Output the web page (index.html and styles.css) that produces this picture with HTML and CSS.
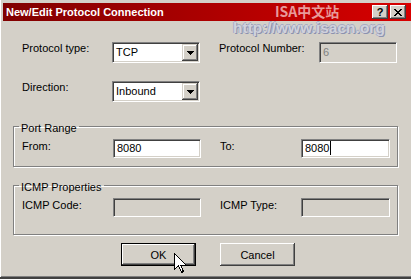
FILE: index.html
```html
<!DOCTYPE html>
<html lang="en">
<head>
    <meta charset="UTF-8">
    <title>New/Edit Protocol Connection</title>
    <link rel="stylesheet" href="styles.css">
</head>
<body>
    <div class="window">
        <div class="titlebar">
            <span class="title">New/Edit Protocol Connection</span>
            <div class="cap-btns">
                <span class="cap-btn">?</span>
                <span class="cap-btn">
                    <svg width="8" height="7" viewBox="0 0 8 7" shape-rendering="crispEdges">
                        <path d="M0 0h2v1h-2zM6 0h2v1h-2zM1 1h2v1h-2zM5 1h2v1h-2zM2 2h4v1h-4zM3 3h2v1h-2zM2 4h4v1h-4zM1 5h2v1h-2zM5 5h2v1h-2zM0 6h2v1h-2zM6 6h2v1h-2z" fill="#000"/>
                    </svg>
                </span>
            </div>
        </div>
        <div class="wm-cn">ISA中文站</div>
        <div class="wm-url">http://www.isacn.org</div>

        <div class="content">
            <div class="top-grid">
                <span class="lbl">Protocol type:</span>
                <div class="combo sunken">
                    <span class="combo-text">TCP</span>
                    <span class="drop raised">
                        <svg width="7" height="4" viewBox="0 0 7 4" shape-rendering="crispEdges"><path d="M0 0h7v1h-1v1h-1v1h-1v1h-1v-1h-1v-1h-1v-1h-1z" fill="#000"/></svg>
                    </span>
                </div>
                <span class="lbl">Protocol Number:</span>
                <div class="field sunken disabled tall">6</div>

                <span class="lbl">Direction:</span>
                <div class="combo sunken">
                    <span class="combo-text">Inbound</span>
                    <span class="drop raised">
                        <svg width="7" height="4" viewBox="0 0 7 4" shape-rendering="crispEdges"><path d="M0 0h7v1h-1v1h-1v1h-1v1h-1v-1h-1v-1h-1v-1h-1z" fill="#000"/></svg>
                    </span>
                </div>
            </div>

            <fieldset class="group port">
                <legend>Port Range</legend>
                <div class="group-row">
                    <span class="lbl">From:</span>
                    <div class="field sunken">8080</div>
                    <span class="lbl">To:</span>
                    <div class="field sunken wide">8080<span class="caret"></span></div>
                </div>
            </fieldset>

            <fieldset class="group icmp">
                <legend>ICMP Properties</legend>
                <div class="group-row">
                    <span class="lbl">ICMP Code:</span>
                    <div class="field sunken disabled"></div>
                    <span class="lbl">ICMP Type:</span>
                    <div class="field sunken disabled wide"></div>
                </div>
            </fieldset>

            <div class="buttons">
                <button class="btn default">OK</button>
                <button class="btn">Cancel</button>
            </div>
        </div>

        <svg class="cursor" width="12" height="20" viewBox="0 0 12 20" shape-rendering="crispEdges">
            <path d="M0.5 0.5v16l4-4 3 7 2-1-3-6.5h5.5z" fill="#fff" stroke="#000" stroke-width="1"/>
        </svg>
    </div>
</body>
</html>
```

FILE: styles.css
```css
* {
    box-sizing: border-box;
}

html, body {
    margin: 0;
}

body {
    width: 411px;
    height: 279px;
    overflow: hidden;
    font-family: "Liberation Sans", Arial, sans-serif;
    font-size: 11px;
    color: #000;
}

.window {
    position: relative;
    height: 279px;
    padding: 3px 0 0 3px;
    background: #d4d0c8;
    border-bottom: 2px solid #404040;
    box-shadow: inset 1px 0 #fff, inset 0 -1px #808080;
}

.titlebar {
    position: relative;
    z-index: 1;
    height: 18px;
    display: flex;
    align-items: center;
    justify-content: space-between;
    padding: 0 5px 0 3px;
    background: linear-gradient(to right, #800000, #d80000);
    color: #fff;
    font-weight: bold;
}

.cap-btns {
    display: flex;
    gap: 2px;
}

.cap-btn {
    width: 16px;
    height: 14px;
    display: flex;
    align-items: center;
    justify-content: center;
    background: #d4d0c8;
    color: #000;
    font-size: 11px;
    font-weight: bold;
    box-shadow: inset -1px -1px #404040, inset 1px 1px #fff, inset -2px -2px #808080;
}

.wm-cn {
    position: absolute;
    left: 275px;
    top: 4px;
    z-index: 2;
    font: bold 14px "Noto Sans CJK SC", sans-serif;
    line-height: 15px;
    color: #e89a9a;
}

.wm-url {
    position: absolute;
    left: 233px;
    top: 20px;
    z-index: 0;
    font: bold 15.5px "Liberation Sans", Arial, sans-serif;
    line-height: 16px;
    color: #d0d2dc;
    text-shadow: 1px 1px 0 #8c92b0, -1px 0 0 #a8acc2, 0 -1px 0 #a8acc2;
}

.content {
    padding: 21px 13px 0 10px;
}

.top-grid {
    display: grid;
    grid-template-columns: 90px 107px 100px 78px;
    grid-auto-rows: 21px;
    row-gap: 18px;
    align-items: start;
    padding-left: 9px;
}

.lbl {
    line-height: 13px;
    white-space: nowrap;
}

.sunken {
    border: 1px solid;
    border-color: #808080 #fff #fff #808080;
    box-shadow: inset 1px 1px #404040, inset -1px -1px #d4d0c8;
}

.raised {
    background: #d4d0c8;
    box-shadow: inset -1px -1px #404040, inset 1px 1px #d4d0c8, inset -2px -2px #808080, inset 2px 2px #fff;
}

.combo {
    width: 88px;
    height: 21px;
    display: flex;
    padding: 1px;
    background: #fff;
}

.combo-text {
    flex: 1;
    padding-left: 2px;
    line-height: 17px;
}

.drop {
    width: 16px;
    height: 17px;
    display: flex;
    align-items: center;
    justify-content: center;
}

.field {
    width: 88px;
    height: 19px;
    padding: 0 3px;
    line-height: 17px;
    background: #fff;
}

.field.tall {
    width: 78px;
    height: 21px;
    line-height: 19px;
}

.field.wide {
    width: 89px;
}

.field.disabled {
    background: #d4d0c8;
    color: #808080;
}

.caret {
    display: inline-block;
    width: 1px;
    height: 14px;
    margin-left: 1px;
    vertical-align: -3px;
    background: #000;
}

.group {
    margin: 16px 0 0;
    padding: 4px 8px 8px;
    min-width: 0;
    border: 1px solid #808080;
    box-shadow: 1px 1px #fff, inset 1px 1px #fff;
}

.group.icmp {
    margin-top: 10px;
    padding-bottom: 17px;
}

.group legend {
    margin-left: -3px;
    padding: 4px 2px 0;
    line-height: 13px;
}

.group-row {
    display: grid;
    grid-template-columns: 91px 107px 81px 89px;
    align-items: start;
}

.group-row .lbl {
    padding-top: 1px;
}

.buttons {
    display: flex;
    gap: 24px;
    margin: 8px 0 0 108px;
}

.btn {
    width: 75px;
    height: 23px;
    padding: 0;
    border: none;
    font: inherit;
    color: #000;
    background: #d4d0c8;
    box-shadow: inset -1px -1px #404040, inset 1px 1px #fff, inset -2px -2px #808080;
}

.btn.default {
    box-shadow: inset 0 0 0 1px #000, inset -2px -2px #404040, inset 2px 2px #fff, inset -3px -3px #808080;
}

.cursor {
    position: absolute;
    left: 174px;
    top: 253px;
    z-index: 3;
}
```
